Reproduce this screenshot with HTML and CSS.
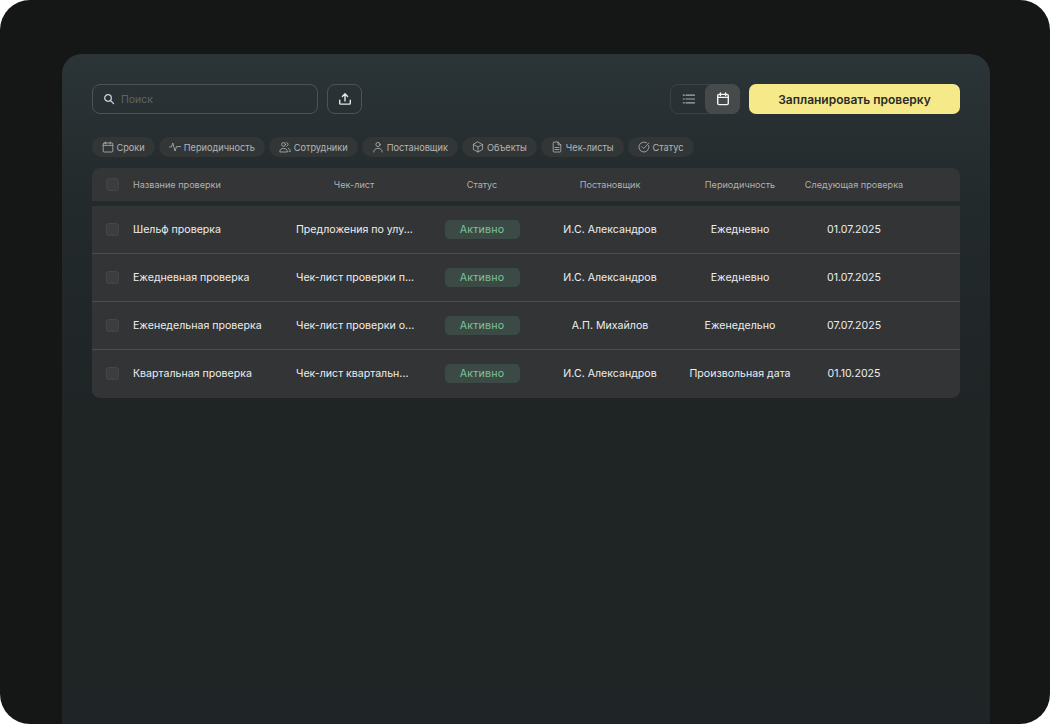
FILE: index.html
```html
<!DOCTYPE html>
<html lang="ru">
<head>
  <meta charset="UTF-8">
  <meta name="viewport" content="width=device-width, initial-scale=1.0">
  <title>Проверки</title>
  <link rel="stylesheet" href="styles.css">
</head>
<body>
  <div class="frame">
    <main class="panel">
      <!-- Toolbar -->
      <div class="toolbar">
        <label class="search">
          <svg class="icon-search" viewBox="0 0 12 12"><circle cx="5" cy="5" r="3.3"/><path d="M7.5 7.5 10.600 10.600"/></svg>
          <span>Поиск</span>
        </label>
        <button class="upload">
          <svg viewBox="0 0 14 14"><path d="M7 9V2M4.400 4.400 7 1.800l2.600 2.600M1.700 8.200v3.100c0 .5.3.8.8.8h9c.5 0 .8-.3.8-.8V8.200"/></svg>
        </button>
        <div class="spacer"></div>
        <div class="view-toggle">
          <span class="view-btn">
            <svg viewBox="0 0 14 14"><path d="M4 3.200h8.500M4 7h8.500M4 10.800h8.500M1.300 3.200h1M1.300 7h1M1.300 10.800h1"/></svg>
          </span>
          <span class="view-btn active">
            <svg viewBox="0 0 14 14"><rect x="1.700" y="2.400" width="10.600" height="10.200" rx="1.400"/><path d="M1.700 5.400h10.600M4.400 1v2.600M9.600 1v2.600"/></svg>
          </span>
        </div>
        <button class="primary">Запланировать проверку</button>
      </div>

      <!-- Filters -->
      <div class="filters">
        <span class="chip"><svg viewBox="0 0 12 12"><rect x="1.200" y="2" width="9.600" height="9" rx="1"/><path d="M1.200 4.400h9.600M3.800 1v2M8.200 1v2"/></svg>Сроки</span>
        <span class="chip"><svg viewBox="0 0 12 12"><path d="M.6 6h1.800l1.400-4 2.200 8 1.600-4.400h4"/></svg>Периодичность</span>
        <span class="chip"><svg viewBox="0 0 12 12"><circle cx="4.600" cy="3.400" r="1.900"/><path d="M.8 10.600c0-2 1.400-3.200 3.800-3.200s3.800 1.200 3.800 3.200zM7.800 1.600a1.900 1.900 0 0 1 0 3.600M9.400 7.500c1.200.3 1.900 1.400 1.900 3.100h-1.200"/></svg>Сотрудники</span>
        <span class="chip"><svg viewBox="0 0 12 12"><circle cx="6" cy="3.500" r="2.100"/><path d="M1.800 11c0-2.400 1.700-3.600 4.200-3.600s4.200 1.200 4.200 3.600"/></svg>Постановщик</span>
        <span class="chip"><svg viewBox="0 0 12 12"><path d="M6 1 10.600 3.500v5L6 11 1.400 8.500v-5zM1.400 3.500 6 6l4.600-2.500M6 6v5"/></svg>Объекты</span>
        <span class="chip"><svg viewBox="0 0 12 12"><path d="M2.200 1.800c0-.5.3-.8.8-.8h4l2.800 2.800v6.400c0 .5-.3.8-.8.8H3c-.5 0-.8-.3-.8-.8zM7 1v2.800h2.800M4 6.500h4M4 8.500h4"/></svg>Чек-листы</span>
        <span class="chip"><svg viewBox="0 0 12 12"><path d="M10.700 4.500A5 5 0 1 1 8.500 1.700"/><path d="M3.800 5.600 5.700 7.500 10.800 2"/></svg>Статус</span>
      </div>

      <!-- Table -->
      <div class="table">
        <div class="row head">
          <span class="check"></span>
          <span>Название проверки</span>
          <span class="center">Чек-лист</span>
          <span class="center">Статус</span>
          <span class="center">Постановщик</span>
          <span class="center">Периодичность</span>
          <span class="center">Следующая проверка</span>
        </div>
        <div class="body">
          <div class="row">
            <span class="check"></span>
            <span>Шельф проверка</span>
            <span class="clip">Предложения по улу...</span>
            <span class="center"><span class="badge">Активно</span></span>
            <span class="center">И.С. Александров</span>
            <span class="center">Ежедневно</span>
            <span class="center">01.07.2025</span>
          </div>
          <div class="row">
            <span class="check"></span>
            <span>Ежедневная проверка</span>
            <span class="clip">Чек-лист проверки п...</span>
            <span class="center"><span class="badge">Активно</span></span>
            <span class="center">И.С. Александров</span>
            <span class="center">Ежедневно</span>
            <span class="center">01.07.2025</span>
          </div>
          <div class="row">
            <span class="check"></span>
            <span>Еженедельная проверка</span>
            <span class="clip">Чек-лист проверки о...</span>
            <span class="center"><span class="badge">Активно</span></span>
            <span class="center">А.П. Михайлов</span>
            <span class="center">Еженедельно</span>
            <span class="center">07.07.2025</span>
          </div>
          <div class="row">
            <span class="check"></span>
            <span>Квартальная проверка</span>
            <span class="clip">Чек-лист квартальн...</span>
            <span class="center"><span class="badge">Активно</span></span>
            <span class="center">И.С. Александров</span>
            <span class="center">Произвольная дата</span>
            <span class="center">01.10.2025</span>
          </div>
        </div>
      </div>
    </main>
  </div>
</body>
</html>
```

FILE: styles.css
```css
/* General reset */
* {
  margin: 0;
  padding: 0;
  box-sizing: border-box;
}

html, body {
  width: 1050px;
  height: 724px;
  overflow: hidden;
  background: #fff;
}

body {
  font-family: 'Inter', 'Liberation Sans', sans-serif;
  color: #f0f0f0;
}

svg {
  fill: none;
  stroke: currentColor;
  stroke-linecap: round;
  stroke-linejoin: round;
}

/* Outer frame and main panel */
.frame {
  width: 1050px;
  height: 724px;
  padding: 54px 60px 0 62px;
  background: #151716;
  border-radius: 30px;
}

.panel {
  height: 670px;
  padding: 30px 30px 0;
  background: linear-gradient(180deg, #2b3437 0%, #232a2c 22%, #1f2425 55%, #1f2426 100%);
  border-radius: 20px 20px 0 0;
}

/* Toolbar */
.toolbar {
  display: flex;
  align-items: stretch;
  height: 30px;
}

.search {
  display: flex;
  align-items: center;
  gap: 6px;
  width: 226px;
  padding-left: 10px;
  border: 1px solid #4c5353;
  border-radius: 8px;
  font-size: 10.5px;
  color: #5f6565;
}

.icon-search {
  width: 12px;
  height: 12px;
  color: #cfd1d1;
  stroke-width: 1.3;
}

.upload {
  display: flex;
  align-items: center;
  justify-content: center;
  width: 35px;
  margin-left: 9px;
  background: none;
  border: 1px solid #4c5353;
  border-radius: 8px;
  color: #e6e6e6;
}

.upload svg {
  width: 14px;
  height: 14px;
  stroke-width: 1.4;
}

.spacer {
  flex: 1;
}

.view-toggle {
  display: flex;
  width: 70px;
  border: 1px solid #3b4141;
  border-radius: 8px;
}

.view-btn {
  display: flex;
  align-items: center;
  justify-content: center;
  flex: 1;
  color: #a9acac;
}

.view-btn svg {
  width: 14px;
  height: 14px;
  stroke-width: 1.2;
}

.view-btn.active {
  margin: -1px;
  background: #474a4a;
  border-radius: 8px;
  color: #f4f4f4;
}

.view-btn.active svg {
  stroke-width: 1.4;
}

.primary {
  width: 211px;
  margin-left: 9px;
  background: #f5e98a;
  border: none;
  border-radius: 7px;
  font-family: inherit;
  font-size: 12px;
  font-weight: 600;
  color: #2b2b2a;
}

/* Filter chips */
.filters {
  display: flex;
  gap: 4px;
  margin-top: 23px;
}

.chip {
  display: flex;
  align-items: center;
  gap: 2.5px;
  height: 20px;
  padding: 0 10.5px 0 10px;
  background: #333637;
  border-radius: 10px;
  font-size: 9.2px;
  color: #b4b6b6;
  white-space: nowrap;
}

.chip svg {
  width: 12px;
  height: 12px;
  stroke-width: .8;
}

/* Table */
.table {
  margin-top: 11px;
}

.row {
  display: grid;
  grid-template-columns: 27px 157px 128px 128px 128px 132px 96px;
  align-items: center;
  height: 48px;
  padding-left: 14px;
  font-size: 10.6px;
  color: #eeeeee;
  border-bottom: 1px solid #4b4e4e;
  white-space: nowrap;
}

.row:last-child {
  border-bottom-color: transparent;
}

.head {
  height: 33px;
  background: #333537;
  border-bottom: none;
  border-radius: 8px 8px 0 0;
  font-size: 9.1px;
  color: #b0b2b2;
}

.body {
  margin-top: 5px;
  background: #323436;
  border-radius: 0 0 8px 8px;
}

.center {
  display: flex;
  justify-content: center;
}

.clip {
  padding-left: 6px;
}

.check {
  width: 13px;
  height: 13px;
  background: #3c3d3c;
  border: 1px solid #454746;
  border-radius: 3px;
}

.badge {
  display: flex;
  align-items: center;
  justify-content: center;
  width: 75px;
  height: 19px;
  background: #3c4a46;
  border-radius: 5px;
  color: #7cc29b;
  letter-spacing: .2px;
}
```
